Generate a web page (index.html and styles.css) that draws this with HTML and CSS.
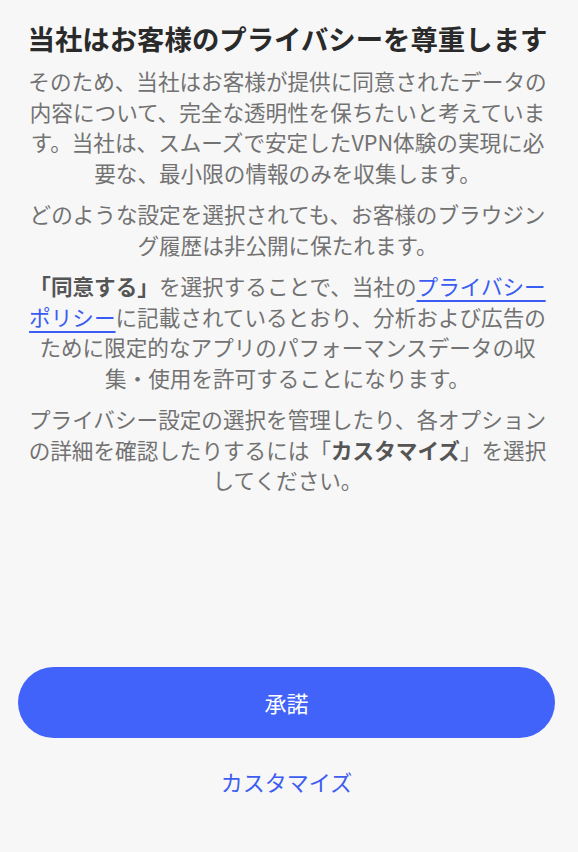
FILE: index.html
```html
<!DOCTYPE html>
<html lang="ja">
<head>
    <meta charset="utf-8">
    <title>プライバシー</title>
    <link rel="stylesheet" href="styles.css">
</head>
<body>
    <div class="screen">
        <div class="content">
            <h1 class="title">当社はお客様のプライバシーを尊重します</h1>
            <p class="text">そのため、当社はお客様が提供に同意されたデータの内容について、完全な透明性を保ちたいと考えています。当社は、スムーズで安定したVPN体験の実現に必要な、最小限の情報のみを収集します。</p>
            <p class="text">どのような設定を選択されても、お客様のブラウジング履歴は非公開に保たれます。</p>
            <p class="text"><b>「同意する」</b>を選択することで、当社の<a class="policy" href="#">プライバシーポリシー</a>に記載されているとおり、分析および広告のために限定的なアプリのパフォーマンスデータの収集・使用を許可することになります。</p>
            <p class="text">プライバシー設定の選択を管理したり、各オプションの詳細を確認したりするには「<b>カスタマイズ</b>」を選択してください。</p>
        </div>
        <div class="actions">
            <button class="accept">承諾</button>
            <a class="customize" href="#">カスタマイズ</a>
        </div>
    </div>
</body>
</html>
```

FILE: styles.css
```css
body {
    margin: 0;
    background: #f7f7f7;
    font-family: "Noto Sans CJK JP", "Noto Sans", sans-serif;
}

.screen {
    height: 852px;
    display: flex;
    flex-direction: column;
}

.content {
    padding: 20px 28px 0 25px;
    text-align: center;
}

.title {
    margin: 0 0 10px;
    font-size: 27.4px;
    line-height: 36px;
    font-weight: 700;
    color: #2a2a2a;
    white-space: nowrap;
}

.text {
    margin: 0 0 11px;
    font-size: 21.6px;
    line-height: 30.5px;
    color: #727272;
}

.text b {
    color: #555555;
    font-weight: 700;
}

.policy {
    color: #3b5cf2;
    text-decoration: underline;
    text-decoration-thickness: 2px;
    text-underline-offset: 5px;
}

.actions {
    margin-top: auto;
    padding: 0 23px 56px 18px;
    display: flex;
    flex-direction: column;
    align-items: center;
}

.accept {
    width: 100%;
    height: 71px;
    padding: 0 0 2px;
    border: none;
    border-radius: 36px;
    background: #4263fa;
    color: #ffffff;
    font-family: inherit;
    font-size: 22px;
    cursor: pointer;
}

.customize {
    margin-top: 28px;
    font-size: 22px;
    line-height: 30px;
    color: #3d5ef0;
    text-decoration: none;
}
```
